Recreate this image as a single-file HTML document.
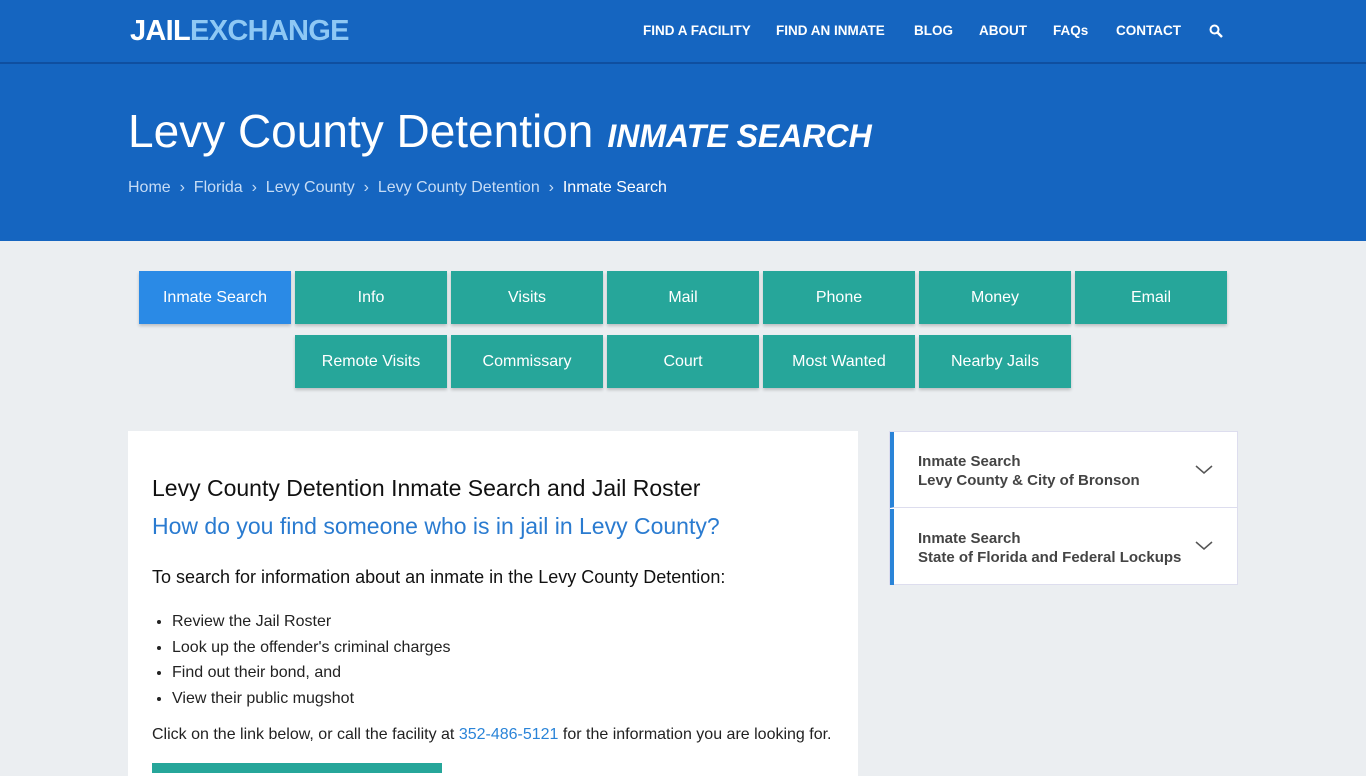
<!DOCTYPE html>
<html><head><meta charset="utf-8"><style>
*{box-sizing:border-box;margin:0;padding:0}
body{width:1366px;height:768px;overflow:hidden;background:#ebeef1;font-family:"Liberation Sans",sans-serif;}
.nav{position:absolute;top:0;left:0;width:1366px;height:64px;background:#1565c0;border-bottom:2px solid #0f4fa0}
.logo{position:absolute;left:130px;top:15px;font-size:29px;font-weight:bold;letter-spacing:-0.7px;color:#fff}
.logo span{color:#8ec8f4}
.menu{position:absolute;top:23px;font-size:13.5px;color:#fff;font-weight:bold}
.hero{position:absolute;top:64px;left:0;width:1366px;height:177px;background:#1565c0}
h1{position:absolute;left:128px;top:40px;font-size:46px;font-weight:normal;color:#fff}
h1 i{font-size:32px;font-weight:bold;margin-left:14px}
.bc{position:absolute;left:128px;top:115px;font-size:16px;color:#c6dcf5}
.bc b{color:#fff;font-weight:normal}
.btn{position:absolute;width:152px;height:53px;background:#26a69a;color:#fff;font-size:16px;text-align:center;line-height:53px;box-shadow:0 2px 3px rgba(0,0,0,.2)}
.card{position:absolute;left:128px;top:431px;width:730px;height:345px;background:#fff}
.side{position:absolute;left:889px;top:431px;width:349px;height:154px;background:#fff;border:1px solid #dde}
.it{position:absolute;left:0;width:348px;height:76px;border-left:4px solid #2a84d8;padding:20px 0 0 24px;font-size:15px;color:#444;font-weight:bold;line-height:19px}
</style></head><body>
<div class="nav"><div class="logo">JAIL<span>EXCHANGE</span></div>
<div class="menu" style="left:643px">FIND A FACILITY</div>
<div class="menu" style="left:776px">FIND AN INMATE</div>
<div class="menu" style="left:914px">BLOG</div>
<div class="menu" style="left:979px">ABOUT</div>
<div class="menu" style="left:1053px">FAQs</div>
<div class="menu" style="left:1116px">CONTACT</div>
<svg style="position:absolute;left:1209px;top:24px" width="14" height="14" viewBox="0 0 14 14"><circle cx="5.5" cy="5.5" r="4" stroke="#fff" stroke-width="2" fill="none"/><path d="M8.5 8.5L13 13" stroke="#fff" stroke-width="2.4"/></svg>
</div>
<div class="hero"><h1>Levy County Detention<i>INMATE SEARCH</i></h1>
<div class="bc">Home &nbsp;›&nbsp; Florida &nbsp;›&nbsp; Levy County &nbsp;›&nbsp; Levy County Detention &nbsp;›&nbsp; <b>Inmate Search</b></div></div>
<div class="btn" style="left:139px;top:271px;background:#2a8ae6">Inmate Search</div>
<div class="btn" style="left:295px;top:271px">Info</div>
<div class="btn" style="left:451px;top:271px">Visits</div>
<div class="btn" style="left:607px;top:271px">Mail</div>
<div class="btn" style="left:763px;top:271px">Phone</div>
<div class="btn" style="left:919px;top:271px">Money</div>
<div class="btn" style="left:1075px;top:271px">Email</div>
<div class="btn" style="left:295px;top:335px">Remote Visits</div>
<div class="btn" style="left:451px;top:335px">Commissary</div>
<div class="btn" style="left:607px;top:335px">Court</div>
<div class="btn" style="left:763px;top:335px">Most Wanted</div>
<div class="btn" style="left:919px;top:335px">Nearby Jails</div>
<div class="card">
<div style="position:absolute;left:24px;top:44px;font-size:23px;color:#111">Levy County Detention Inmate Search and Jail Roster</div>
<div style="position:absolute;left:24px;top:82px;font-size:23px;color:#2a7bd0">How do you find someone who is in jail in Levy County?</div>
<div style="position:absolute;left:24px;top:136px;font-size:18px;color:#111">To search for information about an inmate in the Levy County Detention:</div>
<ul style="position:absolute;left:44px;top:178px;font-size:16px;color:#222;line-height:25.5px"><li>Review the Jail Roster</li><li>Look up the offender's criminal charges</li><li>Find out their bond, and</li><li>View their public mugshot</li></ul>
<div style="position:absolute;left:24px;top:295px;font-size:16px;color:#222">Click on the link below, or call the facility at <span style="color:#2a84d8">352-486-5121</span> for the information you are looking for.</div>
<div style="position:absolute;left:24px;top:332px;width:290px;height:10px;background:#26a69a"></div>
</div>
<div class="side">
<div class="it" style="top:0;border-bottom:1px solid #dde">Inmate Search<br>Levy County &amp; City of Bronson</div>
<div class="it" style="top:77px">Inmate Search<br>State of Florida and Federal Lockups</div>
<svg style="position:absolute;left:305px;top:33px" width="18" height="10"><path d="M1 1L9 8L17 1" stroke="#555" fill="none" stroke-width="1.5"/></svg>
<svg style="position:absolute;left:305px;top:109px" width="18" height="10"><path d="M1 1L9 8L17 1" stroke="#555" fill="none" stroke-width="1.5"/></svg>
</div>
</body></html>
